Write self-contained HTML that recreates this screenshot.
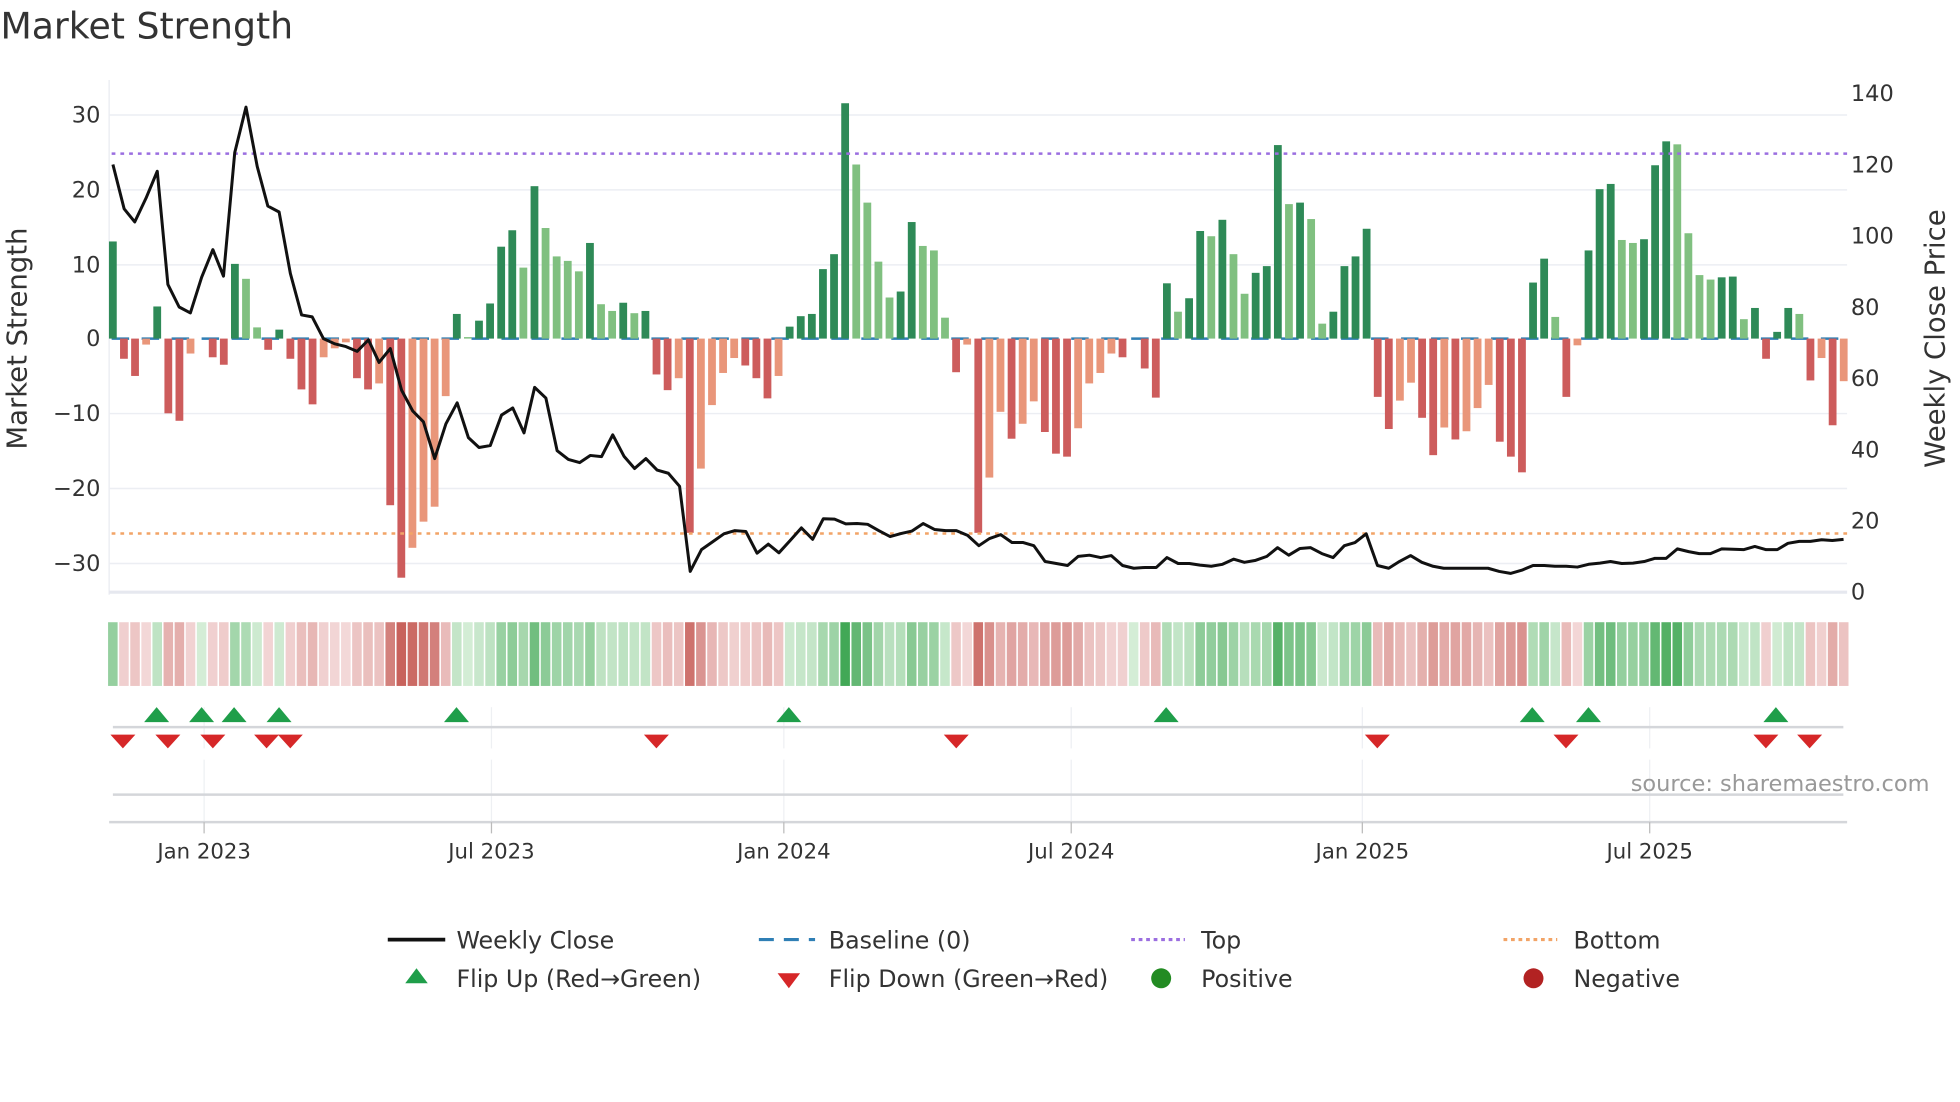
<!DOCTYPE html>
<html><head><meta charset="utf-8"><style>
html,body{margin:0;padding:0;background:#fff;width:1960px;height:1102px;overflow:hidden}
svg{display:block}
text{font-family:"DejaVu Sans","Liberation Sans",sans-serif;fill:#333}
</style></head><body>
<svg id="s" width="1960" height="1102" viewBox="0 0 1568 882" xmlns="http://www.w3.org/2000/svg">
<text x="0" y="31" font-size="29">Market Strength</text>
<g stroke="#eceef3" stroke-width="1.2">
<line x1="87" x2="1478" y1="92" y2="92"/><line x1="87" x2="1478" y1="152" y2="152"/><line x1="87" x2="1478" y1="212" y2="212"/><line x1="87" x2="1478" y1="331" y2="331"/><line x1="87" x2="1478" y1="391" y2="391"/><line x1="87" x2="1478" y1="451" y2="451"/>
<line x1="87" x2="87" y1="64" y2="476"/>
</g>
<line x1="87" x2="1478" y1="474" y2="474" stroke="#e6e8ef" stroke-width="2.5"/>
<g font-size="18" text-anchor="end">
<text x="80" y="98">30</text><text x="80" y="158">20</text><text x="80" y="218">10</text><text x="80" y="277">0</text><text x="80" y="337">−10</text><text x="80" y="397">−20</text><text x="80" y="457">−30</text>
</g>
<g font-size="18">
<text x="1481" y="81">140</text><text x="1481" y="138">120</text><text x="1481" y="195">100</text><text x="1481" y="252">80</text><text x="1481" y="309">60</text><text x="1481" y="366">40</text><text x="1481" y="423">20</text><text x="1481" y="480">0</text>
</g>
<text transform="translate(21,271) rotate(-90)" font-size="22" text-anchor="middle">Market Strength</text>
<text transform="translate(1556,271) rotate(-90)" font-size="22" text-anchor="middle">Weekly Close Price</text>
<line x1="89" x2="1478" y1="271" y2="271" stroke="#2f7fb5" stroke-width="2" stroke-dasharray="14,10"/>
<g transform="scale(1.00513,1)">
<g id="bars"></g>
</g>
<line x1="89" x2="1478" y1="123" y2="123" stroke="#9b6ee0" stroke-width="2" stroke-dasharray="3,4"/>
<line x1="89" x2="1478" y1="427" y2="427" stroke="#f2a467" stroke-width="2" stroke-dasharray="3,4"/>
<g transform="scale(1.00513,1)">
<polyline id="pl" fill="none" stroke="#111" stroke-width="3" stroke-linejoin="round" transform="matrix(0.4975 0 0 0.3168 0 0.2)" vector-effect="non-scaling-stroke"/>
<g id="heat"></g>
</g>
<g stroke="#eef0f3" stroke-width="1">
<line x1="163" x2="163" y1="566" y2="599"/><line x1="393" x2="393" y1="566" y2="599"/><line x1="627" x2="627" y1="566" y2="599"/><line x1="857" x2="857" y1="566" y2="599"/><line x1="1090" x2="1090" y1="566" y2="599"/><line x1="1320" x2="1320" y1="566" y2="599"/>
<line x1="163" x2="163" y1="608" y2="658"/><line x1="393" x2="393" y1="608" y2="658"/><line x1="627" x2="627" y1="608" y2="658"/><line x1="857" x2="857" y1="608" y2="658"/><line x1="1090" x2="1090" y1="608" y2="658"/><line x1="1320" x2="1320" y1="608" y2="658"/>
</g>
<line x1="90" x2="1475" y1="582" y2="582" stroke="#d4d6da" stroke-width="2"/>
<g id="tri"></g>
<text x="1544" y="633" font-size="18" text-anchor="end" style="fill:#999">source: sharemaestro.com</text>
<line x1="90" x2="1475" y1="636" y2="636" stroke="#d4d6da" stroke-width="2"/>
<line x1="87" x2="1478" y1="658" y2="658" stroke="#d4d6da" stroke-width="2"/>
<g stroke="#bbb" stroke-width="1">
<line x1="163" x2="163" y1="658" y2="667"/><line x1="393" x2="393" y1="658" y2="667"/><line x1="627" x2="627" y1="658" y2="667"/><line x1="857" x2="857" y1="658" y2="667"/><line x1="1090" x2="1090" y1="658" y2="667"/><line x1="1320" x2="1320" y1="658" y2="667"/>
</g>
<g font-size="17" text-anchor="middle">
<text x="163" y="687">Jan 2023</text><text x="393" y="687">Jul 2023</text><text x="627" y="687">Jan 2024</text><text x="857" y="687">Jul 2024</text><text x="1090" y="687">Jan 2025</text><text x="1320" y="687">Jul 2025</text>
</g>
<g font-size="19">
<line x1="310" x2="356" y1="752" y2="752" stroke="#111" stroke-width="3"/>
<text x="365" y="759">Weekly Close</text>
<line x1="607" x2="652" y1="752" y2="752" stroke="#2f7fb5" stroke-width="2.5" stroke-dasharray="12,8"/>
<text x="663" y="759">Baseline (0)</text>
<line x1="905" x2="948" y1="752" y2="752" stroke="#9b6ee0" stroke-width="2.5" stroke-dasharray="3,3"/>
<text x="961" y="759">Top</text>
<line x1="1203" x2="1246" y1="752" y2="752" stroke="#f2a467" stroke-width="2.5" stroke-dasharray="3,3"/>
<text x="1259" y="759">Bottom</text>
<polygon points="333,775 342,787 324,787" fill="#1f9e4a"/>
<text x="365" y="790">Flip Up (Red→Green)</text>
<polygon points="622,779 640,779 631,791" fill="#d62728"/>
<text x="663" y="790">Flip Down (Green→Red)</text>
<circle cx="929" cy="783" r="8" fill="#228b22"/>
<text x="961" y="790">Positive</text>
<circle cx="1227" cy="783" r="8" fill="#b22222"/>
<text x="1259" y="790">Negative</text>
</g>
</svg>
<script>
var NS="http://www.w3.org/2000/svg";
var d="13d,-2.7r,-5r,-0.8s,4.3d,-10r,-11r,-2s,0d,-2.5r,-3.5r,10d,8l,1.5l,-1.5r,1.2d,-2.7r,-6.8r,-8.8r,-2.5s,-1.3s,-0.5s,-5.3r,-6.8r,-6s,-22.3r,-32r,-28s,-24.5s,-22.5s,-7.7s,3.3d,0.2l,2.4d,4.7d,12.3d,14.5d,9.5l,20.4d,14.8l,11l,10.4l,9l,12.8d,4.6l,3.7l,4.8d,3.4l,3.7d,-4.8r,-6.9r,-5.3s,-26r,-17.4s,-8.9s,-4.6s,-2.6s,-3.6r,-5.3r,-8r,-5s,1.6d,3d,3.3d,9.3d,11.3d,31.5d,23.3l,18.2l,10.3l,5.5l,6.3d,15.6d,12.4l,11.8l,2.8l,-4.5r,-0.8s,-26r,-18.6s,-9.8s,-13.4r,-11.4s,-8.4s,-12.5r,-15.4r,-15.8r,-12s,-6s,-4.6s,-2s,-2.5r,0d,-4r,-7.9r,7.4d,3.6l,5.4d,14.4d,13.7l,15.9d,11.3l,6l,8.8d,9.7d,25.9d,18l,18.2d,16l,2l,3.6d,9.7d,11d,14.7d,-7.8r,-12.1r,-8.3s,-5.9s,-10.6r,-15.6r,-11.9s,-13.5r,-12.4s,-9.3s,-6.2s,-13.8r,-15.8r,-17.9r,7.5d,10.7d,2.9l,-7.8r,-0.9s,11.8d,20d,20.7d,13.2l,12.8l,13.3d,23.2d,26.4d,26l,14.1l,8.5l,7.9l,8.2d,8.3d,2.6l,4.1d,-2.7r,0.9d,4.1d,3.3l,-5.6r,-2.6s,-11.6r,-5.7s".split(",");
var col={d:"#2e8a57",l:"#80c080",r:"#cd5c5c",s:"#e9967a"};
var bars=document.getElementById("bars"),heat=document.getElementById("heat");
function mix(a,b,t){return "rgb("+a.map(function(v,i){return Math.round(v+(b[i]-v)*t)}).join(",")+")";}
d.forEach(function(e,i){
 var v=parseFloat(e),t=e.slice(-1),x=89.5+i*8.835;
 if(Math.abs(v)>0.05){var r=document.createElementNS(NS,"rect");var h=Math.abs(v)*5.98;
 r.setAttribute("x",x-3.1);r.setAttribute("width",6.2);r.setAttribute("y",v>0?271-h:271);r.setAttribute("height",h);r.setAttribute("fill",col[t]);bars.appendChild(r);}
 var c=document.createElementNS(NS,"rect");c.setAttribute("x",x-4.4+0.6);c.setAttribute("width",7.6);c.setAttribute("y",498);c.setAttribute("height",51);
 var k=Math.min(1,Math.abs(v)/30);
 c.setAttribute("fill",v>=0?mix([212,237,214],[66,168,86],k):mix([244,218,218],[200,98,92],k));heat.appendChild(c);
});
var tri=document.getElementById("tri");
[125,161,187,223,365,631,933,1226,1271,1421].forEach(function(x){var p=document.createElementNS(NS,"polygon");p.setAttribute("points",(x)+",566 "+(x+10)+",578 "+(x-10)+",578");p.setAttribute("fill","#1f9e4a");tri.appendChild(p);});
[98,134,170,213,232,525,765,1102,1253,1413,1448].forEach(function(x){var p=document.createElementNS(NS,"polygon");p.setAttribute("points",(x-10)+",588 "+(x+10)+",588 "+x+",599");p.setAttribute("fill","#d62728");tri.appendChild(p);});
var p1=[[180,415],[198,527],[215,560],[233,500],[251,432],[268,718],[286,775],[304,790],[322,700],[340,630],[357,697],[375,385],[393,270],[411,420],[428,520],[446,535],[464,690],[482,795],[499,800],[517,855],[535,868],[553,875],[571,887],[589,858],[606,915],[624,880],[642,985],[660,1038],[677,1065],[695,1158],[713,1070],[731,1017],[749,1105],[766,1130],[784,1125],[802,1048],[820,1030],[838,1093],[855,978],[873,1005],[891,1138],[909,1160],[927,1168],[944,1150],[962,1153],[980,1098],[998,1152],[1015,1183],[1033,1158],[1051,1187],[1069,1195],[1087,1228],[1104,1443],[1122,1388],[1140,1368],[1158,1348],[1175,1340],[1193,1342],[1211,1397],[1229,1374],[1246,1396],[1264,1365],[1282,1333],[1300,1362],[1317,1310],[1335,1311],[1353,1323],[1371,1322],[1388,1324],[1406,1340],[1424,1355],[1442,1347],[1459,1341],[1477,1322],[1495,1337],[1513,1340],[1530,1340],[1548,1352],[1566,1378]];
var p2=[[15,1360],[33,1350],[51,1370],[69,1370],[86,1378],[104,1418],[122,1423],[140,1428],[157,1405],[175,1402],[193,1408],[210,1403],[228,1428],[246,1435],[264,1433],[282,1433],[299,1408],[317,1423],[335,1423],[352,1427],[370,1430],[388,1425],[406,1412],[423,1420],[441,1415],[459,1405],[476,1383],[494,1402],[512,1385],[529,1383],[547,1398],[565,1408],[583,1378],[600,1370],[618,1348],[636,1428],[654,1435],[671,1418],[689,1403],[707,1420],[725,1430],[742,1435],[760,1435],[778,1435],[796,1435],[813,1435],[831,1443],[849,1448],[867,1440],[885,1428],[903,1428],[920,1430],[938,1430],[956,1432],[974,1425],[992,1422],[1009,1418],[1027,1423],[1045,1422],[1063,1418],[1080,1410],[1098,1410],[1116,1386],[1134,1393],[1151,1398],[1169,1398],[1187,1386],[1205,1387],[1222,1388],[1240,1380],[1258,1388],[1276,1388],[1293,1372],[1311,1367],[1329,1367],[1347,1363],[1364,1365],[1382,1362]];
var pts=p1.map(function(p){return p[0]+","+p[1]}).concat(p2.map(function(p){return (p[0]+1568)+","+p[1]}));
document.getElementById("pl").setAttribute("points",pts.join(" "));
</script>
</body></html>
